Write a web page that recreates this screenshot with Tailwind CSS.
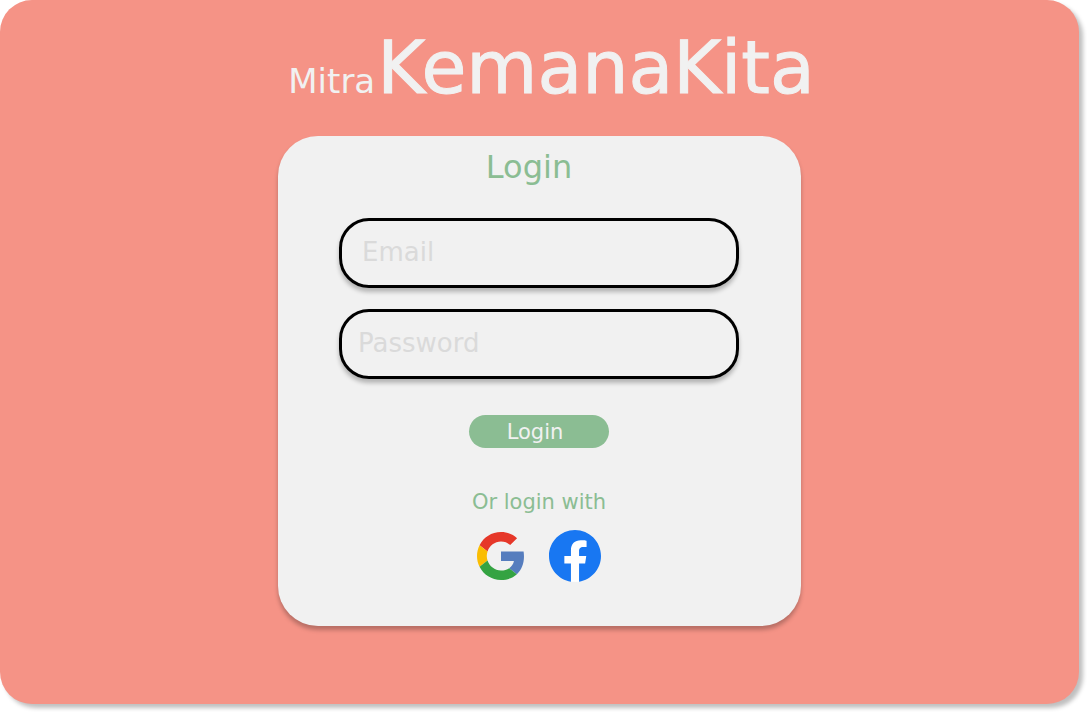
<!DOCTYPE html>
<html lang="en">
<head>
<meta charset="utf-8">
<meta name="viewport" content="width=device-width, initial-scale=1">
<title>Mitra KemanaKita</title>
<script src="https://cdn.jsdelivr.net/npm/@tailwindcss/browser@4"></script>
</head>
<body class="min-h-screen bg-white pr-2 pb-2 flex font-['DejaVu_Sans',sans-serif]">
<main class="flex-1 flex flex-col items-center rounded-[32px] bg-[#f59386] pt-7 pb-16 shadow-[4px_4px_4px_rgba(0,0,0,0.25)]">
  <h1 class="flex items-baseline gap-0.5 pl-6 leading-[80px] text-[#f1f1f1]">
    <span class="text-[34px]">Mitra</span>
    <span class="text-[73px] [-webkit-text-stroke:1px_#f1f1f1]">KemanaKita</span>
  </h1>
  <form class="mt-[15px] w-full max-w-[523px] flex flex-col items-center rounded-[40px] bg-[#f1f1f1] pl-[61px] pr-[62px] pt-3 pb-11 shadow-[0_4px_4px_rgba(0,0,0,0.25)]">
    <h2 class="pr-5 text-[32px] leading-[38px] text-[#8bbd93]">Login</h2>
    <input type="email" aria-label="Email" placeholder="Email" class="mt-8 h-[70px] w-full rounded-[30px] border-3 border-black pl-5 pr-4 pb-0.5 text-[26px] placeholder:text-[#dadada] shadow-[0_4px_4px_rgba(0,0,0,0.25)]">
    <input type="password" aria-label="Password" placeholder="Password" class="mt-[21px] h-[70px] w-full rounded-[30px] border-3 border-black px-4 pb-0.5 text-[26px] placeholder:text-[#dadada] shadow-[0_4px_4px_rgba(0,0,0,0.25)]">
    <button type="submit" class="mt-9 h-[33px] w-[140px] rounded-full bg-[#8bbd93] pr-2 text-[21px] leading-[32px] text-[#f1f1f1]">Login</button>
    <p class="mt-10 text-[21px] leading-[28px] text-[#8bbd93]">Or login with</p>
    <div class="mt-3.5 flex items-center gap-6">
      <button type="button" aria-label="Google">
        <svg class="block size-12" viewBox="0 0 48 48">
          <path fill="#e63729" d="M24 9.5c3.54 0 6.71 1.22 9.21 3.6l6.85-6.85C35.9 2.38 30.47 0 24 0 14.62 0 6.51 5.38 2.56 13.22l7.98 6.19C12.43 13.72 17.74 9.5 24 9.5z"/>
          <path fill="#567dbe" d="M46.98 24.55c0-1.57-.15-3.09-.38-4.95H24v9.42h12.94c-.58 2.96-2.26 5.48-4.78 7.18l7.73 6c4.51-4.18 7.09-10.36 7.09-17.65z"/>
          <path fill="#fabd03" d="M10.53 28.59c-.48-1.45-.76-2.99-.76-4.59s.27-3.14.76-4.59l-7.98-6.19C.92 16.46 0 20.12 0 24c0 3.88.92 7.54 2.56 10.78l7.97-6.19z"/>
          <path fill="#34a342" d="M24 48c6.48 0 11.93-2.13 15.89-5.81l-7.73-6c-2.15 1.45-4.92 2.3-8.16 2.3-6.26 0-11.57-4.22-13.47-9.91l-7.98 6.19C6.51 42.62 14.62 48 24 48z"/>
        </svg>
      </button>
      <button type="button" aria-label="Facebook">
        <svg class="block size-[52px]" viewBox="0 0 24 24">
          <path fill="#fff" d="M7 4h11v12h-4v7.9h-4V16H7z"/>
          <path fill="#1877f2" d="M24 12c0-6.627-5.373-12-12-12S0 5.373 0 12c0 5.99 4.388 10.954 10.125 11.854v-8.385H7.078v-3.47h3.047V9.357c0-3.007 1.792-4.669 4.533-4.669 1.312 0 2.686.235 2.686.235v2.953H15.83c-1.491 0-1.956.925-1.956 1.874V12h3.328l-.532 3.47h-2.796v8.385C19.612 22.954 24 17.99 24 12z"/>
        </svg>
      </button>
    </div>
  </form>
</main>
</body>
</html>
